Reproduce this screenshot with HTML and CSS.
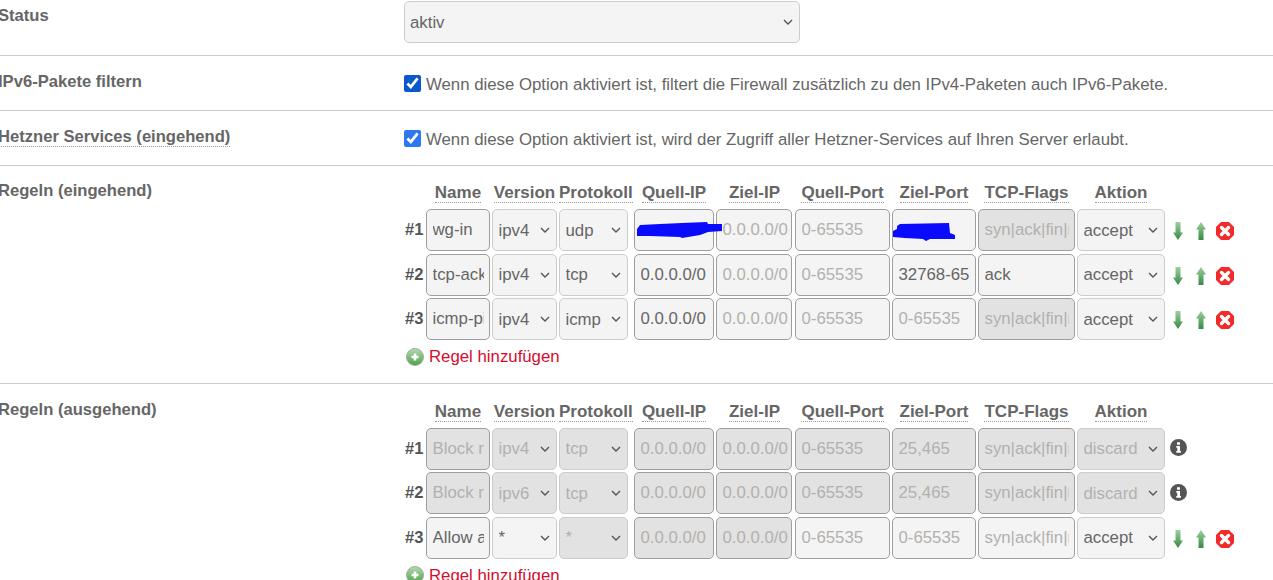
FILE: index.html
```html
<!DOCTYPE html>
<html lang="de">
<head>
    <meta charset="UTF-8">
    <meta name="viewport" content="width=device-width, initial-scale=1.0">
    <title>Firewall</title>
    <link rel="stylesheet" href="styles.css">
</head>
<body>
    <svg class="sprites" width="0" height="0">
        <defs>
            <linearGradient id="arrow-green" x1="0" y1="0" x2="0" y2="1">
                <stop offset="0" stop-color="#9ed09c"/>
                <stop offset="1" stop-color="#358a45"/>
            </linearGradient>
            <linearGradient id="plus-green" x1="0" y1="0" x2="0" y2="1">
                <stop offset="0" stop-color="#b4dbae"/>
                <stop offset="1" stop-color="#4f9f4c"/>
            </linearGradient>
            <symbol id="icon-down" viewBox="0 0 10 18">
                <path d="M2.5 0h5v10.5H10L5 18 0 10.5h2.5z" fill="url(#arrow-green)"/>
            </symbol>
            <symbol id="icon-up" viewBox="0 0 10 18">
                <path d="M2.5 18h5V7.5H10L5 0 0 7.5h2.5z" fill="url(#arrow-green)"/>
            </symbol>
            <symbol id="icon-delete" viewBox="0 0 18 18">
                <path d="M5 0h8l5 5v8l-5 5H5l-5-5V5z" fill="#f22a2a"/>
                <path d="M5.5 5.5l7 7M12.5 5.5l-7 7" stroke="#fff" stroke-width="3.4" stroke-linecap="round"/>
            </symbol>
            <symbol id="icon-plus" viewBox="0 0 18 18">
                <circle cx="9" cy="9" r="8.5" fill="url(#plus-green)" stroke="#a3aca3"/>
                <path d="M9 5.5v7M5.5 9h7" stroke="#fff" stroke-width="2.6"/>
            </symbol>
            <symbol id="icon-info" viewBox="0 0 17 17">
                <circle cx="8.5" cy="8.5" r="8.5" fill="#555"/>
                <path d="M7 3.2h3v2.6H7zM6.3 7h3.7v5h1v1.8H6.3V12h1V8.8h-1z" fill="#fff"/>
            </symbol>
        </defs>
    </svg>

    <form class="settings">
        <div class="row row-status">
            <label class="row-label">Status</label>
            <div>
                <select class="status-select">
                    <option>aktiv</option>
                </select>
            </div>
        </div>

        <div class="row row-check">
            <label class="row-label">IPv6-Pakete filtern</label>
            <div class="check-line">
                <input type="checkbox" class="check-dark" checked>
                <span>Wenn diese Option aktiviert ist, filtert die Firewall zusätzlich zu den IPv4-Paketen auch IPv6-Pakete.</span>
            </div>
        </div>

        <div class="row row-check">
            <label class="row-label"><span class="hint">Hetzner Services (eingehend)</span></label>
            <div class="check-line">
                <input type="checkbox" checked>
                <span>Wenn diese Option aktiviert ist, wird der Zugriff aller Hetzner-Services auf Ihren Server erlaubt.</span>
            </div>
        </div>

        <div class="row row-rules row-in">
            <label class="row-label">Regeln (eingehend)</label>
            <div>
                <div class="rules">
                    <div></div>
                    <div class="head"><span>Name</span></div>
                    <div class="head"><span>Version</span></div>
                    <div class="head"><span>Protokoll</span></div>
                    <div class="head"><span>Quell-IP</span></div>
                    <div class="head"><span>Ziel-IP</span></div>
                    <div class="head"><span>Quell-Port</span></div>
                    <div class="head"><span>Ziel-Port</span></div>
                    <div class="head"><span>TCP-Flags</span></div>
                    <div class="head"><span>Aktion</span></div>
                    <div></div>

                    <div class="num">#1</div>
                    <input value="wg-in">
                    <select><option>ipv4</option></select>
                    <select class="narrow"><option>udp</option></select>
                    <div class="masked">
                        <input>
                        <svg class="scribble scribble-ip" width="90" height="20" viewBox="0 0 90 20"><path d="M3 10L6 6 26 5 48 4 73 3 74 5 88 5 88 12 74 13 66 16 48 19 46 18 16 17 3 17z"/></svg>
                    </div>
                    <input class="dest-ip" placeholder="0.0.0.0/0">
                    <input placeholder="0-65535">
                    <div class="masked">
                        <input>
                        <svg class="scribble" width="66" height="22" viewBox="0 0 66 22"><path d="M5 5L8 3 57 2 58 12 63 14 63 18 38 18 34 20 31 18 13 17 1 16 1 10 5 8z"/></svg>
                    </div>
                    <input class="off" placeholder="syn|ack|fin|rst|psh|urg">
                    <select><option>accept</option></select>
                    <div class="acts">
                        <svg class="ic-arrow"><use href="#icon-down"/></svg>
                        <svg class="ic-arrow"><use href="#icon-up"/></svg>
                        <svg class="ic-del"><use href="#icon-delete"/></svg>
                    </div>

                    <div class="num">#2</div>
                    <input value="tcp-ack">
                    <select><option>ipv4</option></select>
                    <select class="narrow"><option>tcp</option></select>
                    <input value="0.0.0.0/0">
                    <input class="dest-ip" placeholder="0.0.0.0/0">
                    <input placeholder="0-65535">
                    <input value="32768-65535">
                    <input value="ack">
                    <select><option>accept</option></select>
                    <div class="acts">
                        <svg class="ic-arrow"><use href="#icon-down"/></svg>
                        <svg class="ic-arrow"><use href="#icon-up"/></svg>
                        <svg class="ic-del"><use href="#icon-delete"/></svg>
                    </div>

                    <div class="num">#3</div>
                    <input value="icmp-ping">
                    <select><option>ipv4</option></select>
                    <select class="narrow"><option>icmp</option></select>
                    <input value="0.0.0.0/0">
                    <input class="dest-ip" placeholder="0.0.0.0/0">
                    <input placeholder="0-65535">
                    <input placeholder="0-65535">
                    <input class="off" placeholder="syn|ack|fin|rst|psh|urg">
                    <select><option>accept</option></select>
                    <div class="acts">
                        <svg class="ic-arrow"><use href="#icon-down"/></svg>
                        <svg class="ic-arrow"><use href="#icon-up"/></svg>
                        <svg class="ic-del"><use href="#icon-delete"/></svg>
                    </div>
                </div>
                <a class="add-rule" href="#"><svg class="ic-plus"><use href="#icon-plus"/></svg>Regel hinzufügen</a>
            </div>
        </div>

        <div class="row row-rules">
            <label class="row-label">Regeln (ausgehend)</label>
            <div>
                <div class="rules">
                    <div></div>
                    <div class="head"><span>Name</span></div>
                    <div class="head"><span>Version</span></div>
                    <div class="head"><span>Protokoll</span></div>
                    <div class="head"><span>Quell-IP</span></div>
                    <div class="head"><span>Ziel-IP</span></div>
                    <div class="head"><span>Quell-Port</span></div>
                    <div class="head"><span>Ziel-Port</span></div>
                    <div class="head"><span>TCP-Flags</span></div>
                    <div class="head"><span>Aktion</span></div>
                    <div></div>

                    <div class="num">#1</div>
                    <input class="off" placeholder="Block mail">
                    <select class="off"><option>ipv4</option></select>
                    <select class="off narrow"><option>tcp</option></select>
                    <input class="off" placeholder="0.0.0.0/0">
                    <input class="off dest-ip" placeholder="0.0.0.0/0">
                    <input class="off" placeholder="0-65535">
                    <input class="off" placeholder="25,465">
                    <input class="off" placeholder="syn|ack|fin|rst|psh|urg">
                    <select class="off"><option>discard</option></select>
                    <div class="acts"><svg class="ic-info"><use href="#icon-info"/></svg></div>

                    <div class="num">#2</div>
                    <input class="off" placeholder="Block mail">
                    <select class="off"><option>ipv6</option></select>
                    <select class="off narrow"><option>tcp</option></select>
                    <input class="off" placeholder="0.0.0.0/0">
                    <input class="off dest-ip" placeholder="0.0.0.0/0">
                    <input class="off" placeholder="0-65535">
                    <input class="off" placeholder="25,465">
                    <input class="off" placeholder="syn|ack|fin|rst|psh|urg">
                    <select class="off"><option>discard</option></select>
                    <div class="acts"><svg class="ic-info"><use href="#icon-info"/></svg></div>

                    <div class="num">#3</div>
                    <input value="Allow all">
                    <select><option>*</option></select>
                    <select class="off narrow"><option>*</option></select>
                    <input class="off" placeholder="0.0.0.0/0">
                    <input class="off dest-ip" placeholder="0.0.0.0/0">
                    <input placeholder="0-65535">
                    <input placeholder="0-65535">
                    <input placeholder="syn|ack|fin|rst|psh|urg">
                    <select><option>accept</option></select>
                    <div class="acts">
                        <svg class="ic-arrow"><use href="#icon-down"/></svg>
                        <svg class="ic-arrow"><use href="#icon-up"/></svg>
                        <svg class="ic-del"><use href="#icon-delete"/></svg>
                    </div>
                </div>
                <a class="add-rule" href="#"><svg class="ic-plus"><use href="#icon-plus"/></svg>Regel hinzufügen</a>
            </div>
        </div>
    </form>
</body>
</html>
```

FILE: styles.css
```css
* {
    margin: 0;
    padding: 0;
    box-sizing: border-box;
}

html, body {
    height: 100%;
    overflow: hidden;
}

body {
    font-family: 'Liberation Sans', Arial, sans-serif;
    font-size: 16.8px;
    color: #666;
    background: #fff;
}

.sprites {
    position: absolute;
}

.settings {
    margin-left: -1px;
    margin-top: -1px;
}

.row {
    display: grid;
    grid-template-columns: 405px 1fr;
    border-bottom: 1px solid #ccc;
}

.row:last-child {
    border-bottom: none;
}

.row-status {
    height: 57px;
    padding-top: 2px;
}

.row-check {
    height: 55px;
    padding-top: 19px;
}

.row-rules {
    height: 218px;
    padding-top: 17.5px;
}

.row-in {
    padding-top: 17.3px;
}

.row-label {
    font-weight: bold;
    font-size: 16.6px;
    line-height: 18px;
    margin-left: -1px;
}

.row-status .row-label {
    padding-top: 6px;
}

.row-rules .row-label {
    margin-top: -1px;
}

.row-check .row-label {
    margin-top: -2px;
}

.hint {
    border-bottom: 1px dotted #999;
}

select.status-select {
    width: 396px;
    height: 42px;
    padding-left: 5px;
}

.check-line {
    display: flex;
    align-items: center;
    gap: 5px;
    height: 18px;
}

.check-line span {
    padding-top: 2px;
}

.check-line input {
    width: 17px;
    height: 17px;
    margin-top: -2px;
    accent-color: #2d78f0;
}

.check-line .check-dark {
    accent-color: #0b57d0;
}

.rules {
    display: grid;
    grid-template-columns: 20px 64px 65px 73px 80px 77px 95px 84px 97px 88px auto;
    grid-template-rows: 23.5px repeat(3, 42px);
    column-gap: 2px;
    row-gap: 2.5px;
}

.head {
    text-align: center;
    font-weight: bold;
    font-size: 17px;
    line-height: 18px;
    padding-top: 1px;
    white-space: nowrap;
}

.head span {
    display: inline-block;
    border-bottom: 1px dotted #999;
}

.num {
    font-weight: bold;
    font-size: 16.6px;
    line-height: 42px;
    color: #555;
    padding-left: 1px;
}

input:not([type="checkbox"]), select {
    font-family: inherit;
    font-size: 16.8px;
    color: #666;
    background-color: #f4f4f4;
    border-radius: 5px;
    height: 42px;
    width: 100%;
    padding: 0 5.5px;
    min-width: 0;
    outline: none;
}

input:not([type="checkbox"]) {
    border: 1px solid #9e9e9e;
}

input::placeholder {
    color: #b3b0ae;
    opacity: 1;
}

input.dest-ip {
    width: 76px;
    padding-right: 0;
}

select {
    appearance: none;
    border: 1px solid #ccc;
    background-image: url("data:image/svg+xml,%3Csvg xmlns='http://www.w3.org/2000/svg' width='10' height='6'%3E%3Cpath d='M1 1l4 4 4-4' fill='none' stroke='%23555' stroke-width='1.4'/%3E%3C/svg%3E");
    background-repeat: no-repeat;
    background-position: right 6px center;
}

select.narrow {
    width: 69px;
}

select.off {
    color: #b3b0ae;
}

input.off, select.off {
    background-color: #e2e2e2;
}

.masked {
    position: relative;
}

.scribble {
    position: absolute;
    left: 0;
    top: 12px;
    z-index: 2;
    fill: #0a0aff;
}

.scribble-ip {
    top: 10px;
}

.acts {
    display: flex;
    align-items: center;
    padding-left: 6px;
    padding-top: 2px;
}

.ic-arrow {
    width: 10px;
    height: 18px;
    margin-right: 13px;
}

.ic-arrow + .ic-arrow {
    margin-right: 10px;
}

.ic-del {
    width: 18px;
    height: 18px;
}

.ic-info {
    width: 17px;
    height: 17px;
    margin-left: -3px;
    margin-top: -4px;
}

.add-rule {
    display: flex;
    align-items: center;
    gap: 5px;
    margin-top: 7px;
    margin-left: 2px;
    color: #d50c2d;
    text-decoration: none;
    line-height: 19px;
}

.ic-plus {
    width: 18px;
    height: 18px;
}
```
